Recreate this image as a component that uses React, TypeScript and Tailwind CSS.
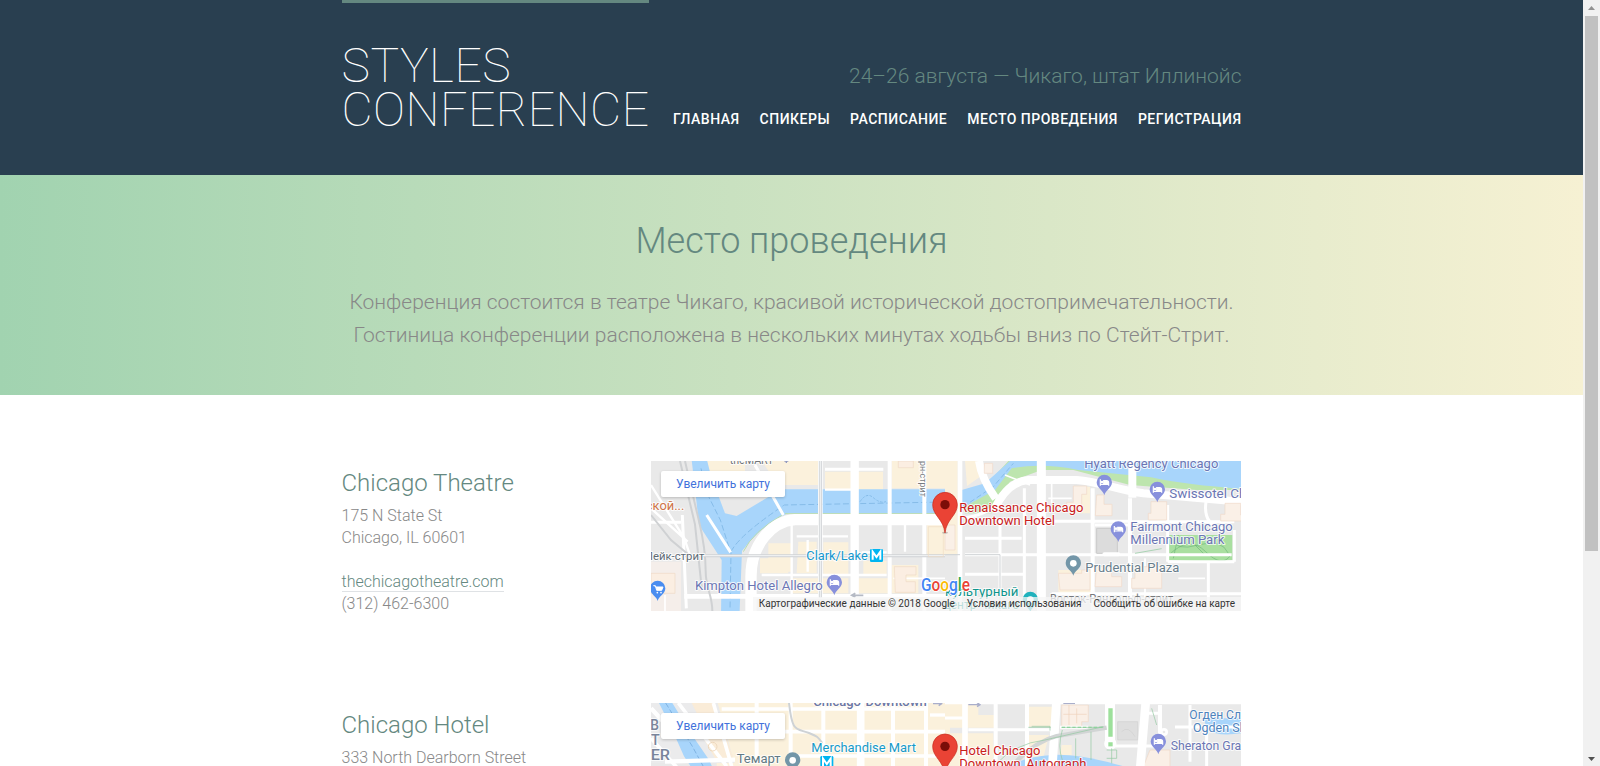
import React from "react";

type LabelProps = {
  x: number;
  y: number;
  w?: number;
  size?: number;
  fill: string;
  weight?: number;
  halo?: boolean;
  rotate?: boolean;
  children: string;
};

/* Map caption with the usual white halo. */
function Label({ x, y, w, size = 39, fill, weight = 400, halo = true, rotate, children }: LabelProps) {
  return (
    <text
      x={x}
      y={y}
      fontSize={size}
      fill={fill}
      fontWeight={weight}
      textLength={w}
      lengthAdjust="spacingAndGlyphs"
      stroke={halo ? "#ffffff" : "none"}
      strokeWidth={halo ? 6 : 0}
      strokeOpacity={0.8}
      strokeLinejoin="round"
      paintOrder="stroke"
      transform={rotate ? `rotate(90 ${x} ${y})` : undefined}
    >
      {children}
    </text>
  );
}

function HotelPin({ x, y }: { x: number; y: number }) {
  return (
    <g transform={`translate(${x} ${y})`}>
      <path d="M0 38C-3 24-23 16-23-1a23 23 0 0 1 46 0C23 16 3 24 0 38Z" fill="#8790dc" />
      <path d="M-12-10v19M-12 5h25v4M13 5v-5q0-6-6-6h-9v9" fill="none" stroke="#fff" strokeWidth="3.5" />
      <circle cx="-7" cy="-2" r="4" fill="#fff" />
      <path d="M-1-6h8q6 0 6 6v4H-1Z" fill="#fff" />
    </g>
  );
}

function RedPin({ x, y }: { x: number; y: number }) {
  return (
    <g transform={`translate(${x} ${y})`}>
      <ellipse cx="0" cy="84" rx="9" ry="3" fill="#666" opacity=".35" />
      <path d="M0 85C-5 42-37 33-37 0a37 37 0 0 1 74 0C37 33 5 42 0 85Z" fill="#ea4335" stroke="#c5281c" strokeWidth="2" />
      <circle r="14" fill="#7b0d08" />
    </g>
  );
}

function PlacePin({ x, y, fill, dot = 10 }: { x: number; y: number; fill: string; dot?: number }) {
  return (
    <g transform={`translate(${x} ${y})`}>
      <path d="M0 37C-3 23-23 16-23-1a23 23 0 0 1 46 0C23 16 3 23 0 37Z" fill={fill} />
      <circle r={dot} fill="#fff" />
    </g>
  );
}

function Metro({ x, y }: { x: number; y: number }) {
  return (
    <g transform={`translate(${x} ${y})`}>
      <rect width="39" height="39" rx="4" fill="#00b5f1" />
      <path d="M8 32V8l11.500 16L31 8v24" fill="none" stroke="#fff" strokeWidth="6" />
    </g>
  );
}

function TheatreMap() {
  return (
    <svg className="block" width="590" height="150" viewBox="0 0 590 150" fontFamily="Roboto, sans-serif">
      <rect width="590" height="150" fill="#e9e9e9" />
      {/* western half */}
      <g transform="translate(-6 -6) scale(.333333)">
        <path d="M180 18h120v40H180zM350 18h170v72H400zM540 50h174v55H540zM740 18h160v82H740zM370 265h70v85h-70zM460 260h55v95h-60zM345 310h85v45h-85zM535 262h75v95h-75zM655 318h70v40h-70zM740 330h80v85h-80zM845 210h60v90h-60zM640 370h90v45h-90zM440 370h170v45H440z" fill="#fbf1dc" />
        <path d="M18 320h90v150H18z" fill="#f5eeea" />
        <path d="M140 15h46l12 48 42 112 35 8 75-45 60-35h490v72H430q-58 22-112 80l-27 33-8 202h-55l2-175-68-105-8-73Z" fill="#a8d5fb" />
        <g fill="none" stroke="#86bce8" strokeWidth="3" strokeDasharray="18 8">
          <path d="M168 40l18 75 40 80 32 100-3 170M258 290q25-50 160-140l482-9" />
          <path d="M645 140q20-30 40-12t38 12" strokeDasharray="8 4" />
        </g>
        <path d="M420 176h480M295 290q28-60 120-112" fill="none" stroke="#b8dcb0" strokeWidth="3" />
        <g fill="none" stroke="#fff">
          <path d="M905 194H450c-70 5-132 75-132 170v110" strokeWidth="34" />
          <path d="M629 18v450" strokeWidth="25" />
          <path d="M734 18v450M838 18v450" strokeWidth="12" />
          <path d="M526 18v410M118 424h790" strokeWidth="14" />
          <path d="M330 30l85 150M185 180l72 112M540 43h175M18 202h90M112 180l12 280" strokeWidth="9" />
          <path d="M18 90l100 160 20 60M18 160l110 100M455 244h154M540 104h85M780 210v80M488 255v95M350 360h375M650 292h75M440 200v230" strokeWidth="7" />
          <path d="M745 370h155M800 424v40M60 420v50" strokeWidth="5" />
        </g>
        <path d="M120 18c20 90 30 130 42 180s20 95 20 150 20 70 20 120M105 18l45 190 20 190M18 180l60 75 60 50" fill="none" stroke="#cfd1d3" strokeWidth="6" />
        <path d="M120 302h780M526 18v410" fill="none" stroke="#cfd2d5" strokeWidth="9" />
        <path d="M120 302h780M526 18v410" fill="none" stroke="#eef0f1" strokeWidth="4" />
        <path d="M748 335h65v25h-30v20h28v32h-60zM18 355h72v60H18zM760 18h45v20h-45z" fill="#fbeee2" stroke="#efd9c6" strokeWidth="2" />
        <path d="M850 215h45v90h-45z" fill="none" stroke="#f0dcc5" strokeWidth="2" />
        <Label x={254} y={27} w={132} size={36} fill="#70757a">theMART</Label>
        <path d="M424 10v14M418 18h12" stroke="#9098c0" strokeWidth="4" />
        <Label x={-18} y={164} w={136} size={37} fill="#cf7448">еской...</Label>
        <Label x={0} y={315} w={178} size={33} fill="#5f6b75">Лейк-стрит</Label>
        <Label x={825} y={-12} w={138} size={27} fill="#767b80" rotate>борн-стрит</Label>
        <Label x={484} y={314} w={184} size={41} fill="#1597ce">Clark/Lake</Label>
        <Metro x={675} y={282} />
        <Label x={150} y={406} w={383} size={40} fill="#6b76b4">Kimpton Hotel Allegro</Label>
        <HotelPin x={568} y={383} />
        <PlacePin x={38} y={401} fill="#4a8df0" dot={0} />
        <path d="M25 392h6l4 14h15l4-10H33" fill="#fff" stroke="#fff" strokeWidth="3" />
        <circle cx="37" cy="413" r="2.500" fill="#fff" />
        <circle cx="48" cy="413" r="2.500" fill="#fff" />
        <path d="M655 421h-34m10-6l-11 6 11 6" fill="none" stroke="#b5bac5" strokeWidth="5" />
      </g>
      {/* eastern half */}
      <g transform="translate(294 -6) scale(.333333)">
        <path d="M0 18h38v280H0zM60 18h42l14 40-50 35zM390 95h45v80h-45zM340 345h100v70H340z" fill="#fbf1dc" />
        <path d="M60 175h80l55-95 95-35h95l170 45 200 15 133 0v-30L560 40 260 18h-70L105 110l-45 30Z" fill="#bde5ae" />
        <path d="M50 160V105L120 85l75-67h693v83q-160-10-270-34L400 45q-110-22-200-5l-50 65-100 55Z" fill="#a8d5fb" />
        <path d="M55 155l90-60 60-70" fill="none" stroke="#86bce8" strokeWidth="3" strokeDasharray="16 8" />
        <path d="M670 240h192v75l-60 5-132-5Z" fill="#a9dfa0" />
        <path d="M680 250q10 40 80 20t90 25M672 300q60-60 110-10t75 10M700 240l-15 70M740 260l40 40" fill="none" stroke="#6fb77a" strokeWidth="2" />
        <g fill="none" stroke="#fff">
          <path d="M102 18q8 55 50 112M145 170q40-90 105-95h145c70 5 120 30 200 40l293 25" strokeWidth="24" />
          <path d="M289 18v450" strokeWidth="27" />
          <path d="M562 18v110" strokeWidth="24" />
          <path d="M443 100v365M555 130v340" strokeWidth="12" />
          <path d="M45 18v450" strokeWidth="14" />
          <path d="M60 188q80-10 120-65M60 250h170M60 299h800M60 358h175M310 199h240M238 100v360M165 190v230M450 210h105M320 416h568M668 320h200M790 320v148M668 150v170M868 225v95M558 200h310M783 140q-10 70 50 80" strokeWidth="9" />
          <path d="M310 130h70M320 80v65M180 60l75 30M600 310v150M700 370h80" strokeWidth="5" />
        </g>
        <path d="M455 220h62v75h-62z" fill="#dcdcdc" stroke="#cacaca" strokeWidth="3" />
        <path d="M385 93h40v25h-15v48h-45v-24h20ZM455 120h22v28h24v34h-50zM618 140h47v55h-55v-20h8ZM840 145h47v35h20v18h-80v-20h13ZM340 355h70v-10h25v60h-90zM455 335h45v30h30v30h-80zM570 335h80v65h-90v-30h10ZM0 210h30v75H0zM118 25h25v30h-25z" fill="#faf0e7" stroke="#f0dac8" strokeWidth="2" />
        <path d="M0 299h45M60 299h105v170" fill="none" stroke="#cfd2d5" strokeWidth="3" />
        <path d="M570 295l80-14" stroke="#8cc89a" strokeWidth="2" />
        <path d="M478 298h42" stroke="#fff" strokeWidth="12" strokeLinecap="round" />
        <Label x={418} y={40} w={402} size={38} fill="#6b76b4">Hyatt Regency Chicago</Label>
        <HotelPin x={478} y={83} />
        <HotelPin x={637} y={104} />
        <Label x={673} y={128} w={330} size={39} fill="#6b76b4">Swissotel Chicago</Label>
        <HotelPin x={520} y={223} />
        <Label x={556} y={227} w={307} size={40} fill="#6b76b4">Fairmont Chicago</Label>
        <Label x={556} y={266} w={282} size={40} fill="#6b76b4">Millennium Park</Label>
        <PlacePin x={385} y={325} fill="#7396a8" />
        <Label x={421} y={350} w={282} size={39} fill="#687d8b">Prudential Plaza</Label>
        <RedPin x={0} y={149} />
        <Label x={43} y={171} w={372} size={41} fill="#c9201b">Renaissance Chicago</Label>
        <Label x={43} y={209} w={287} size={41} fill="#c9201b">Downtown Hotel</Label>
        <PlacePin x={256} y={434} fill="#20b2bd" />
        <Label x={0} y={423} w={220} size={38} fill="#0e958c">культурный</Label>
        <Label x={-4} y={463} w={226} size={38} fill="#0e958c">центр Чикаго</Label>
        <Label x={315} y={445} w={370} size={36} fill="#77797c">Восток-Рандольф-стрит</Label>
      </g>
      <text x="270" y="130" fontSize="17.5" fontWeight="500" textLength="49" lengthAdjust="spacingAndGlyphs" stroke="#fff" strokeWidth="2" strokeLinejoin="round" paintOrder="stroke">
        <tspan fill="#4285f4">G</tspan>
        <tspan fill="#ea4335">o</tspan>
        <tspan fill="#fbbc05">o</tspan>
        <tspan fill="#4285f4">g</tspan>
        <tspan fill="#34a853">l</tspan>
        <tspan fill="#ea4335">e</tspan>
      </text>
    </svg>
  );
}

function HotelMap() {
  return (
    <svg className="block" width="590" height="150" viewBox="0 0 590 150" fontFamily="Roboto, sans-serif">
      <rect width="590" height="150" fill="#e9e9e9" />
      {/* western half */}
      <g transform="translate(-6 -8) scale(.333333)">
        <path d="M215 24h700v250H215Z" fill="#fbf1dc" />
        <path d="M18 24h200l50 180H18Z" fill="#ebebec" />
        <path d="M42 24h40l55 90 55 80 35 80h-50l-60-90-40-90Z" fill="#a8d5fb" />
        <path d="M62 24l80 130 60 110" fill="none" stroke="#7fb3e2" strokeWidth="3" strokeDasharray="16 7" />
        <path d="M140 24h65l15 50h-55ZM175 130h70l20 60h-55Z" fill="#faecd8" />
        <g fill="none" stroke="#fff">
          <path d="M100 24l145 190M18 130l80 90M205 24l55 190" strokeWidth="11" />
          <path d="M18 40l65 70M60 200l210-6" strokeWidth="13" />
          <path d="M230 42h610M230 110h670M430 183h470" strokeWidth="11" />
          <path d="M335 24v170M437 24v190M535 24v190M744 24v190M843 24v190" strokeWidth="12" />
          <path d="M647 24v190" strokeWidth="23" />
          <path d="M855 60h50" strokeWidth="10" />
        </g>
        <path d="M432 24c10 90 20 75 60 90 25 10 25 10 40 30" fill="none" stroke="#ced2d5" strokeWidth="6" />
        <circle cx="203" cy="155" r="13" fill="none" stroke="#edd8be" strokeWidth="3" />
        <Label x={505} y={34} w={340} size={37} weight={500} fill="#6b76a4">Chicago-Downtown</Label>
        <path d="M864 26h26m-9-6l9 6-9 6" fill="none" stroke="#a9aecb" strokeWidth="4" />
        <Label x={16} y={105} w={26} size={43} weight={500} fill="#79849b">B</Label>
        <Label x={18} y={151} w={26} size={43} weight={500} fill="#79849b">T</Label>
        <Label x={17} y={195} w={58} size={43} weight={500} fill="#79849b">ER</Label>
        <Label x={499} y={170} w={314} size={40} fill="#159ac9">Merchandise Mart</Label>
        <Metro x={526} y={183} />
        <Label x={275} y={203} w={132} size={38} fill="#617984">Темарт</Label>
        <PlacePin x={443} y={196} fill="#7396a8" />
      </g>
      {/* eastern half */}
      <g transform="translate(294 -8) scale(.333333)">
        <path d="M0 24h100v36h50v38H0zM252 35h78v60h-78zM0 115h145v100H0zM252 120h60l-20 80h-40zM350 150h30v65h-40Z" fill="#fbf1dc" />
        <path d="M190 215q50-30 130-35t220 35Z" fill="#a8d5fb" />
        <path d="M775 70h113v45q-70 10-100-10Z" fill="#a8d5fb" />
        <path d="M350 30h80v50h-20v15h-60ZM615 165h60v50h-80Z" fill="#faefe6" stroke="#f0d8c5" strokeWidth="2" />
        <path d="M372 30v60M395 40v45M355 58h70" stroke="#eed2bb" strokeWidth="2" />
        <path d="M518 80h60v55h-60ZM530 110q20-20 40 15" fill="#dedede" stroke="#d0d0d0" strokeWidth="2" />
        <g fill="none" stroke="#fff">
          <path d="M0 25h888" strokeWidth="6" />
          <path d="M60 24v190" strokeWidth="17" />
          <path d="M334 24l-12 190M602 24l-16 190" strokeWidth="26" />
          <path d="M152 24v190M246 24v190M645 30v90" strokeWidth="12" />
          <path d="M495 24v130" strokeWidth="30" />
          <path d="M0 69h55M70 104h250M510 153h120M690 96h198M785 96v120M735 30v170M345 97h85M605 55h35" strokeWidth="9" />
          <circle cx="496" cy="146" r="14" strokeWidth="9" />
          <circle cx="657" cy="111" r="8" strokeWidth="8" />
        </g>
        <path d="M215 198q60-60 120-75l150-25" fill="none" stroke="#d2d5d5" strokeWidth="13" />
        <path d="M490 40h13v85h-13ZM490 142h13v12h-13Z" fill="#9de09b" />
        <path d="M250 97h67M350 97h125M260 94h55v13M392 130v60M438 110v85M150 210q60-65 150-75l175-40M352 105q-15 50 0 90M485 165h30v25h-30M500 160v45M620 40l15 50" fill="none" stroke="#91c9a0" strokeWidth="2" />
        <path d="M350 97h125" stroke="#8fd39d" strokeWidth="4" strokeDasharray="10 6" />
        <path d="M70 29h35m-9-6l9 6-9 6M355 25h35" fill="none" stroke="#a9aecb" strokeWidth="4" />
        <RedPin x={0} y={154} />
        <Label x={43} y={180} w={243} size={41} fill="#c9201b">Hotel Chicago</Label>
        <Label x={43} y={219} w={381} size={41} fill="#c9201b">Downtown, Autograph</Label>
        <HotelPin x={640} y={140} />
        <Label x={677} y={164} w={232} size={40} fill="#6b76b4">Sheraton Gran</Label>
        <Label x={733} y={73} w={176} size={38} fill="#4e83bd">Огден Сли</Label>
        <Label x={744} y={111} w={158} size={38} fill="#4e83bd">Ogden Sli</Label>
      </g>
    </svg>
  );
}

function MapFrame({ children }: { children: React.ReactNode }) {
  return (
    <div className="relative mr-[0.5px] h-[150px] w-[590px] overflow-hidden">
      {children}
      <a className="absolute top-[10px] left-[10px] flex h-[26px] w-[124px] items-center justify-center rounded-[2px] bg-white text-[12px] font-normal text-[#4272db] shadow-[0_1px_3px_rgba(0,0,0,0.2)]">
        <span>Увеличить карту</span>
      </a>
      <div className="absolute right-0 bottom-0 flex h-[14px] items-center gap-[12px] bg-[#f5f5f5]/75 pr-[6px] pl-[6px] text-[10px] leading-[14px] font-normal whitespace-nowrap text-[#333]">
        <span>Картографические данные © 2018 Google</span>
        <span>Условия использования</span>
        <span>Сообщить об ошибке на карте</span>
      </div>
    </div>
  );
}

type VenueProps = { name: string; lines: string[]; site: string; phone: string; map: React.ReactNode };

function Venue({ name, lines, site, phone, map }: VenueProps) {
  return (
    <section className="flex h-[242px] items-start justify-between">
      <div>
        <h3 className="pt-[7px] pb-[7px] text-[24px] leading-[30px] text-[#648880]">{name}</h3>
        <p>
          {lines.map((line) => (
            <span key={line} className="block">
              {line}
            </span>
          ))}
        </p>
        <p className="mt-[22px]">
          <a className="border-b border-[#dfe2e5] text-[#648880]">{site}</a>
          <span className="block">{phone}</span>
        </p>
      </div>
      <MapFrame>{map}</MapFrame>
    </section>
  );
}

const links = ["Главная", "Спикеры", "Расписание", "Место проведения", "Регистрация"];

export default function App() {
  return (
    <div className="flex h-[766px] w-full overflow-hidden bg-white font-[Roboto,sans-serif] text-[16px] leading-[22px] font-light text-[#888]">
      <main className="min-w-0 flex-1">
        <header className="h-[175px] bg-[#293f50]">
          <div className="mx-auto flex w-[900px] justify-between">
            <h1 className="h-[132px] w-[307px] border-t-[3px] border-[#648880] pt-[41px] text-[48px] leading-[44px] font-thin tracking-[0.5px] text-white uppercase">
              Styles
              <br />
              Conference
            </h1>
            <div className="flex flex-col items-end pt-[64px]">
              <p className="text-[21px] leading-[24px] whitespace-nowrap text-[#648880]">24–26 августа — Чикаго, штат Иллинойс</p>
              <nav className="mt-[20px] flex gap-[20px] text-[14px] leading-[22px] font-medium tracking-[0.5px] whitespace-nowrap text-white uppercase">
                {links.map((l) => (
                  <a key={l}>{l}</a>
                ))}
              </nav>
            </div>
          </div>
        </header>

        <section className="h-[220px] bg-linear-to-r from-[#a1d3b0] to-[#f6f1d3] text-center">
          <h2 className="pt-[44px] text-[36px] leading-[44px] text-[#648880]">Место проведения</h2>
          <p className="mt-[23px] text-[21px] leading-[33px]">
            Конференция состоится в театре Чикаго, красивой исторической достопримечательности.
            <br />
            Гостиница конференции расположена в нескольких минутах ходьбы вниз по Стейт-Стрит.
          </p>
        </section>

        <div className="mx-auto w-[900px] pt-[66px]">
          <Venue
            name="Chicago Theatre"
            lines={["175 N State St", "Chicago, IL 60601"]}
            site="thechicagotheatre.com"
            phone="(312) 462-6300"
            map={<TheatreMap />}
          />
          <Venue
            name="Chicago Hotel"
            lines={["333 North Dearborn Street", "Chicago, IL 60654"]}
            site="hotelchicago.com"
            phone="(312) 462-6300"
            map={<HotelMap />}
          />
        </div>
      </main>

      <aside className="flex w-[17px] flex-col items-center bg-[#f1f1f1]">
        <svg className="block" width="17" height="16" viewBox="0 0 17 16">
          <path d="M5 10h7L8.500 6Z" fill="#929292" />
        </svg>
        <div className="h-[535px] w-[13px] bg-[#c1c1c1]" />
        <svg className="mt-auto block" width="17" height="16" viewBox="0 0 17 16">
          <path d="M5 7h7l-3.500 4Z" fill="#505050" />
        </svg>
      </aside>
    </div>
  );
}
